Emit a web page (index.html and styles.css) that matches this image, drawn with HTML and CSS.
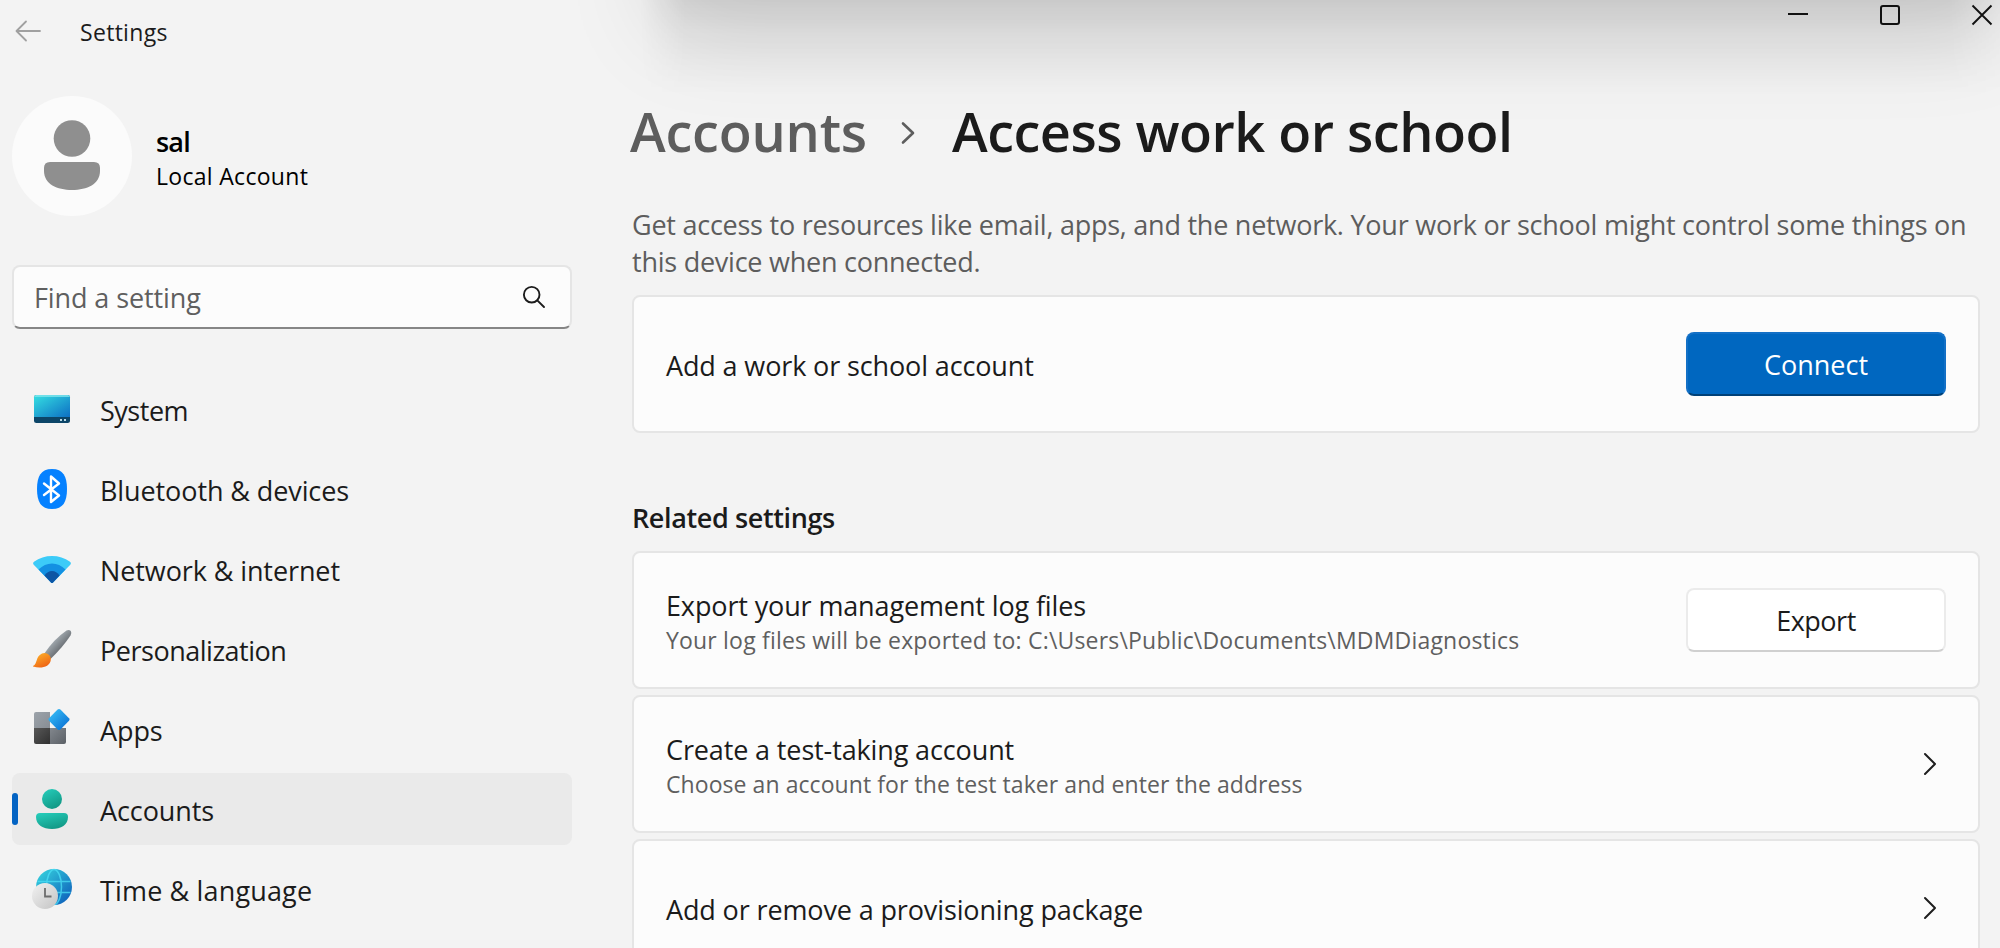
FILE: index.html
```html
<!DOCTYPE html>
<html lang="en">
<head>
<meta charset="utf-8">
<title>Settings</title>
<link rel="stylesheet" href="styles.css">
</head>
<body>
<div class="window">
  <div class="shadow-clip"><div class="shadow-wide"></div><div class="shadow-tight"></div></div>

  <aside class="sidebar">
    <header class="titlebar">
      <svg class="back" width="28" height="24" viewBox="0 0 28 24" fill="none" stroke="#a0a0a0" stroke-width="1.8" stroke-linecap="round" stroke-linejoin="round"><path d="M26 12H3M12 2.5L2.5 12L12 21.5"/></svg>
      <span class="app-name">Settings</span>
    </header>

    <section class="profile">
      <svg class="avatar" width="120" height="120" viewBox="0 0 120 120"><circle cx="60" cy="60" r="60" fill="#fbfbfb"/><circle cx="60" cy="42.5" r="18.3" fill="#8f8f8f"/><path d="M38 66H82Q88 66 88 72V75C88 88 75 94 60 94S32 88 32 75V72Q32 66 38 66Z" fill="#8f8f8f"/></svg>
      <div class="who">
        <strong class="user">sal</strong>
        <span class="kind">Local Account</span>
      </div>
    </section>

    <div class="search">
      <span class="placeholder">Find a setting</span>
      <svg width="24" height="24" viewBox="0 0 24 24" fill="none" stroke="#1c1c1c" stroke-width="1.9" stroke-linecap="round"><circle cx="9.7" cy="9.7" r="7.8"/><path d="M15.3 15.3L22 22"/></svg>
    </div>

    <nav class="nav">
      <a class="item"><svg class="ico" width="40" height="40" viewBox="0 0 40 40"><defs><linearGradient id="sys" x1="0" y1="0" x2="1" y2="1"><stop offset="0" stop-color="#35e0e2"/><stop offset="1" stop-color="#0d6fc4"/></linearGradient></defs><rect x="2" y="6" width="36" height="28" rx="2.5" fill="#0c4568"/><path d="M2 28V8.500Q2 6 4.500 6H35.500Q38 6 38 8.500V28Z" fill="url(#sys)"/><path d="M2 8Q2 6 4.500 6H35.500Q38 6 38 8Z" fill="#7fe5ec" opacity=".8"/><rect x="28" y="30" width="2" height="2" fill="#b9d9e6"/><rect x="32" y="30" width="2" height="2" fill="#b9d9e6"/></svg><span class="tight">System</span></a>
      <a class="item"><svg class="ico" width="40" height="40" viewBox="0 0 40 40"><path d="M20 0C31 0 35 7 35 20S31 40 20 40S5 33 5 20S9 0 20 0Z" fill="#0581ff"/><path d="M12 14.500L27 26.500L19 33V7.500L27 14.500L12 26" fill="none" stroke="#fff" stroke-width="2.400" stroke-linejoin="round" stroke-linecap="round"/></svg><span>Bluetooth &amp; devices</span></a>
      <a class="item"><svg class="ico" width="40" height="40" viewBox="0 0 40 40"><path d="M1.500 15.500Q.3 14 2 12.800Q10 7 20 7T38 12.800Q39.700 14 38.500 15.500L21 33.500Q20 34.500 19 33.500Z" fill="#3ccbf8"/><path d="M6.500 20.500Q12.500 14.500 20 14.500T33.500 20.500L21 33.500Q20 34.500 19 33.500Z" fill="#1390e2"/><path d="M12.500 26.500Q15.500 22 20 22T27.500 26.500L21 33.500Q20 34.500 19 33.500Z" fill="#0d55a4"/></svg><span>Network &amp; internet</span></a>
      <a class="item"><svg class="ico" width="40" height="40" viewBox="0 0 40 40"><defs><linearGradient id="hd" x1=".3" y1=".3" x2=".65" y2=".65"><stop offset="0" stop-color="#adb5bb"/><stop offset="1" stop-color="#686d72"/></linearGradient><linearGradient id="br" x1="0" y1="0" x2=".6" y2="1"><stop offset="0" stop-color="#ffb92c"/><stop offset="1" stop-color="#ee6414"/></linearGradient></defs><path d="M12 25Q22 10 34.500 1.500Q37 .3 38.800 2Q40 4 38.500 6.500Q31 18 18.500 30Z" fill="url(#hd)"/><path d="M1 37C6 34.500 3 28 10 24.500C14 22.500 19.500 26 18.800 31C18 38 9 40 1 37.500Z" fill="url(#br)"/></svg><span class="tight">Personalization</span></a>
      <a class="item"><svg class="ico" width="40" height="40" viewBox="0 0 40 40"><defs><linearGradient id="ap" x1="0" y1="0" x2="1" y2="1"><stop offset="0" stop-color="#3bc6fb"/><stop offset="1" stop-color="#0567cf"/></linearGradient><linearGradient id="dk" x1="0" y1="0" x2="1" y2="1"><stop offset="0" stop-color="#585858"/><stop offset="1" stop-color="#303030"/></linearGradient><linearGradient id="gy" x1="0" y1="0" x2="1" y2="1"><stop offset="0" stop-color="#9ca3aa"/><stop offset="1" stop-color="#878d94"/></linearGradient><linearGradient id="gz" x1="0" y1="0" x2="1" y2="1"><stop offset="0" stop-color="#82878d"/><stop offset="1" stop-color="#5b6066"/></linearGradient></defs><path d="M2 20V5Q2 3 4 3H18V20Z" fill="url(#gy)"/><path d="M2 19H18V35H4Q2 35 2 33Z" fill="url(#dk)"/><path d="M18 19H34V33Q34 35 32 35H18Z" fill="url(#gz)"/><path d="M25.600 .6Q27 -.6 28.400 .6L37 9.200Q38.200 10.500 37 11.800L28.400 20.400Q27 21.600 25.600 20.400L17 11.800Q15.800 10.500 17 9.200Z" fill="url(#ap)"/></svg><span>Apps</span></a>
      <a class="item active"><svg class="ico" width="40" height="40" viewBox="0 0 40 40"><defs><linearGradient id="ac" x1="0" y1="0" x2=".5" y2="1"><stop offset="0" stop-color="#27cfbd"/><stop offset="1" stop-color="#129a87"/></linearGradient></defs><circle cx="20" cy="10" r="10" fill="url(#ac)"/><path d="M8 24H32Q36 24 36 28C36 36 29 40 20 40S4 36 4 28Q4 24 8 24Z" fill="url(#ac)"/></svg><span>Accounts</span></a>
      <a class="item"><svg class="ico" width="40" height="40" viewBox="0 0 40 40"><defs><linearGradient id="gl" x1="0" y1="0" x2="1" y2="1"><stop offset="0" stop-color="#38d9e0"/><stop offset="1" stop-color="#0a56b8"/></linearGradient><linearGradient id="ck" x1="0" y1="0" x2="1" y2="1"><stop offset="0" stop-color="#f2f2f2"/><stop offset="1" stop-color="#c3c3c3"/></linearGradient></defs><circle cx="22" cy="18" r="18" fill="url(#gl)"/><g fill="none" stroke="#4be0f6" stroke-width="1.500" opacity=".75"><ellipse cx="22" cy="18" rx="7.500" ry="17.500"/><path d="M5.500 12.500H38.500M5.500 23.500H38.500"/></g><circle cx="13" cy="27" r="13" fill="url(#ck)"/><path d="M13 19V27.500H19.500" fill="none" stroke="#6d6d6d" stroke-width="1.800"/></svg><span class="loose">Time &amp; language</span></a>
    </nav>
  </aside>

  <main class="content">
    <div class="controls">
      <svg width="22" height="22" viewBox="0 0 22 22"><path d="M1 10H21" stroke="#111" stroke-width="2"/></svg>
      <svg width="22" height="22" viewBox="0 0 22 22"><rect x="2" y="2" width="18" height="18" rx="2" fill="none" stroke="#111" stroke-width="2"/></svg>
      <svg width="22" height="22" viewBox="0 0 22 22"><path d="M1.500 1.500L20.500 20.500M20.500 1.500L1.500 20.500" stroke="#111" stroke-width="1.900"/></svg>
    </div>

    <h1 class="crumbs">
      <span class="parent">Accounts</span>
      <svg width="16" height="24" viewBox="0 0 16 24" fill="none" stroke="#5d5d5d" stroke-width="2.600" stroke-linecap="round" stroke-linejoin="round"><path d="M3 2.500L13 12L3 21.500"/></svg>
      <span class="current">Access work or school</span>
    </h1>

    <p class="intro">Get access to resources like email, apps, and the network. Your work or school might control some things on<br>this device when connected.</p>

    <section class="card">
      <div class="text"><div class="title">Add a work or school account</div></div>
      <button class="btn primary">Connect</button>
    </section>

    <h2 class="related">Related settings</h2>

    <div class="stack">
      <section class="card">
        <div class="text"><div class="title">Export your management log files</div><div class="sub path">Your log files will be exported to: C:\Users\Public\Documents\MDMDiagnostics</div></div>
        <button class="btn export">Export</button>
      </section>
      <section class="card">
        <div class="text"><div class="title">Create a test-taking account</div><div class="sub">Choose an account for the test taker and enter the address</div></div>
        <svg class="go" width="16" height="24" viewBox="0 0 16 24" fill="none" stroke="#1f1f1f" stroke-width="2" stroke-linecap="round" stroke-linejoin="round"><path d="M3 2L13 12L3 22"/></svg>
      </section>
      <section class="card">
        <div class="text"><div class="title">Add or remove a provisioning package</div></div>
        <svg class="go" width="16" height="24" viewBox="0 0 16 24" fill="none" stroke="#1f1f1f" stroke-width="2" stroke-linecap="round" stroke-linejoin="round"><path d="M3 2L13 12L3 22"/></svg>
      </section>
    </div>
  </main>
</div>
</body>
</html>
```

FILE: styles.css
```css
* { box-sizing: border-box; }

body {
  margin: 0;
  background: #f3f3f3;
  color: #1b1b1b;
  font-family: "Open Sans", "Noto Sans", sans-serif;
  font-size: 27px;
}

.window {
  position: relative;
  display: flex;
  width: 2000px;
  height: 948px;
  overflow: hidden;
}

/* shadow falling on the title area from a window above */
.shadow-clip { position: absolute; inset: 0; overflow: hidden; }
.shadow-wide {
  position: absolute;
  left: 660px;
  top: -300px;
  width: 1340px;
  height: 300px;
  box-shadow: 0 30px 100px rgba(0, 0, 0, .12);
}
.shadow-tight {
  position: absolute;
  left: 640px;
  top: 0;
  width: 1360px;
  height: 95px;
  background: linear-gradient(rgba(0, 0, 0, .085), rgba(0, 0, 0, .048) 32%, rgba(0, 0, 0, .022) 65%, transparent);
  -webkit-mask-image: linear-gradient(90deg, transparent, #000 45px, #000 1310px, rgba(0, 0, 0, .3));
  mask-image: linear-gradient(90deg, transparent, #000 45px, #000 1310px, rgba(0, 0, 0, .3));
}

.sidebar {
  position: relative;
  width: 572px;
  padding-left: 12px;
}

.titlebar { display: flex; align-items: center; height: 62px; }
.back { margin-left: 2px; }
.app-name { margin-left: 38px; font-size: 23px; line-height: 32px; padding-top: 2px; letter-spacing: .3px; }

.profile { display: flex; gap: 24px; margin-top: 34px; color: #000; }
.avatar { display: block; }
.who { display: flex; flex-direction: column; padding-top: 28px; }
.user { font-weight: 600; line-height: 35px; letter-spacing: -.8px; }
.kind { font-size: 23px; line-height: 34px; letter-spacing: .3px; }

.search {
  display: flex;
  align-items: center;
  justify-content: space-between;
  height: 64px;
  margin-top: 49px;
  padding: 0 24px 2px 20px;
  border: 2px solid #e5e5e5;
  border-bottom-color: #868686;
  border-radius: 8px;
  background: #fcfcfc;
}
.placeholder { color: #5f5f5f; padding-top: 3px; letter-spacing: -.1px; }
.search svg { margin-top: 2px; }

.nav { display: flex; flex-direction: column; gap: 8px; margin-top: 44px; }
.item {
  position: relative;
  display: flex;
  align-items: center;
  gap: 28px;
  height: 72px;
  padding-left: 20px;
  border-radius: 8px;
  letter-spacing: -.1px;
}
.item span { padding-top: 2px; }
.tight { letter-spacing: -.48px; }
.loose { letter-spacing: .15px; }
.ico { display: block; overflow: visible; }
.active { background: #eaeaea; }
.active::before {
  content: "";
  position: absolute;
  left: 0;
  top: 20px;
  width: 6px;
  height: 32px;
  border-radius: 3px;
  background: #0363c3;
}

.content { position: relative; width: 1428px; padding: 0 20px 0 60px; }

.controls {
  display: flex;
  justify-content: flex-end;
  gap: 70px;
  height: 26px;
  padding-top: 4px;
  margin-right: -13px;
}

.crumbs {
  display: flex;
  align-items: center;
  margin: 67px 0 0 -2px;
  height: 76px;
  font-size: 54px;
  font-weight: 600;
  line-height: 76px;
  white-space: nowrap;
}
.crumbs svg { margin: 3px 36px 0 33px; }
.parent { color: #5d5d5d; letter-spacing: -.2px; }
.current { letter-spacing: -.5px; }

.intro {
  margin: 37px 0 0;
  height: 89px;
  color: #5d5d5d;
  line-height: 37px;
  letter-spacing: -.245px;
  white-space: nowrap;
}

.card {
  display: flex;
  align-items: center;
  justify-content: space-between;
  height: 138px;
  padding: 0 32px;
  border: 2px solid #e5e5e5;
  border-radius: 8px;
  background: #fcfcfc;
  white-space: nowrap;
}
.title { line-height: 36px; padding-top: 3px; letter-spacing: -.13px; }
.sub { color: #5f5f5f; font-size: 23px; line-height: 32px; letter-spacing: .07px; }
.path { letter-spacing: .19px; }

.btn {
  width: 260px;
  height: 64px;
  padding: 0;
  border: 2px solid #ebebeb;
  border-bottom-color: #d0d0d0;
  border-radius: 8px;
  background: #fff;
  color: #1b1b1b;
  font: inherit;
}
.export { letter-spacing: -.5px; }
.primary {
  border-color: #1370c6;
  border-bottom-color: #004178;
  background: #0067c0;
  color: #fff;
}

.related { margin: 67px 0 15px; font-size: 27px; font-weight: 600; line-height: 36px; letter-spacing: -.38px; }
.stack { display: flex; flex-direction: column; gap: 6px; }
.go { margin-right: 8px; }
```
